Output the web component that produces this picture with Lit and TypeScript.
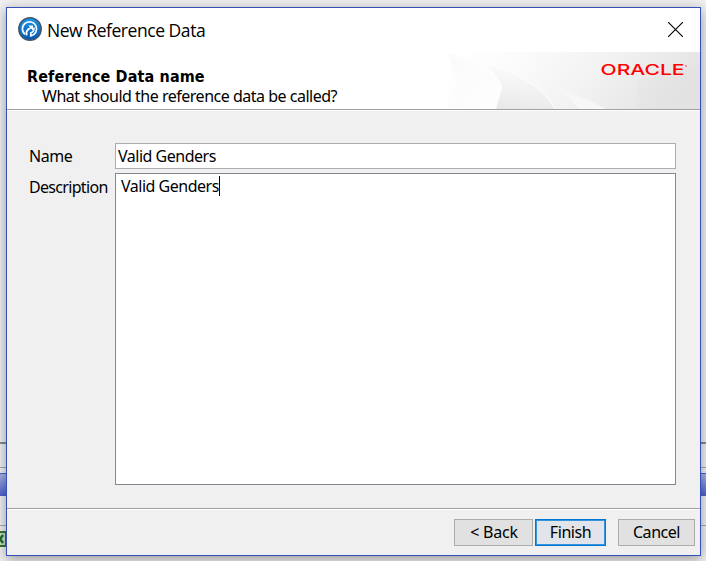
import { LitElement, html, css, svg } from "lit";
import { customElement } from "lit/decorators.js";

const logo = svg`
  <defs>
    <linearGradient id="disc" x1="0" y1="0" x2="0" y2="1">
      <stop offset="0" stop-color="#1a96ea" /><stop offset="1" stop-color="#0656b0" />
    </linearGradient>
  </defs>
  <circle cx="12" cy="12" r="11.2" fill="url(#disc)" stroke="#43586c" stroke-width="1.5" />
  <path d="M7 17.4A7.1 7.1 0 1 1 12.8 18.9V15.9A4.2 4.2 0 0 0 15.9 10.6" fill="none" stroke="#f2f9ff" stroke-width="1.7" />
  <path d="M8.8 18.4C7.6 15.2 8.8 12.4 12.6 11.2" fill="none" stroke="#fff" stroke-width="1.9" />
  <path d="M10.2 8.6H15V13.4Z" fill="#fff" />`;

const banner = svg`
  <defs>
    <linearGradient id="bg" x1="0" y1=".2" x2="1" y2=".4"><stop offset="0" stop-color="#fff" /><stop offset=".3" stop-color="#fafafa" /><stop offset=".6" stop-color="#f2f2f2" /><stop offset="1" stop-color="#e3e3e3" /></linearGradient>
    <linearGradient id="fold" x1="0" y1="0" x2="1" y2="1"><stop offset="0" stop-color="#fafafa" /><stop offset="1" stop-color="#fefefe" /></linearGradient>
    <linearGradient id="shade" x1=".3" y1="1" x2=".6" y2="0"><stop offset="0" stop-color="#e8e8e8" /><stop offset="1" stop-color="#f3f3f3" stop-opacity="0" /></linearGradient>
    <linearGradient id="ray" x1="0" y1="0" x2="1" y2="1"><stop offset="0" stop-color="#fff" stop-opacity=".1" /><stop offset="1" stop-color="#fff" stop-opacity=".65" /></linearGradient>
  </defs>
  <rect width="252" height="57" fill="url(#bg)" />
  <path d="M0 1C26 7 48 18 54 36L48 57H5L8 27Z" fill="url(#fold)" />
  <path d="M54 36C53 27 45 19 37 12C72 20 100 38 106 57H48Z" fill="url(#shade)" />
  <path d="M0 3C28 8 49 19 54 36M37 12C72 20 98 38 107 57" fill="none" stroke="#fff" stroke-opacity=".65" stroke-width="1.2" />
  <path d="M107 33C126 42 144 49 158 57H131C124 48 114 39 107 33Z" fill="url(#ray)" />
  <path d="M189 27L252 15V57H189Z" fill="#ddd" opacity=".22" />`;

@customElement("app-root")
export class AppRoot extends LitElement {
  static styles = css`
    :host { display: block; position: relative; width: 706px; height: 561px; overflow: hidden;
      background: #f0f0f0; color: #000; font: 16px/20px "Noto Sans", sans-serif; letter-spacing: -.49px; }
    * { box-sizing: border-box; }
    .desktop { position: absolute; inset: 0; display: grid; align-content: start;
      grid-template-rows: 442px 2px 23px 1px 5px 23px 29px 1px 5px 16px 14px; }
    .rule { background: #858b92; }
    .thin { background: #aaa; }
    .selected { background: linear-gradient(#a9b4e8, #4c60cf); border-top: 1px solid #4a60c8; }
    .sheet { width: 8px; height: 16px; display: block; }
    .window { position: absolute; left: 6px; top: 7px; width: 695px; height: 549px;
      border: 1px solid #3350b8; background: #f0f0f0; display: flex; flex-direction: column;
      box-shadow: 0 3px 12px rgba(0,0,0,.38); }
    .title { height: 44px; background: #fff; display: flex; align-items: center; padding: 0 17px 0 11px; }
    .title svg { margin-top: -2px; }
    .title .app { width: 24px; height: 24px; }
    .title span { flex: 1; margin-left: 5px; font: 17.5px/24px "Open Sans", sans-serif; letter-spacing: -.45px; }
    .head { height: 57px; background: #fff; position: relative; padding: 15px 0 0 20px; }
    .art { position: absolute; right: 0; top: 0; }
    .brand { font: 500 15px Inter, sans-serif; letter-spacing: 0; }
    .head b, .head p { display: block; margin: 0; position: relative; white-space: nowrap; }
    .head b { width: max-content; font: bold 16px/19px "DejaVu Sans Condensed", "DejaVu Sans", sans-serif; font-stretch: condensed; letter-spacing: .13px; }
    .head p { padding-left: 15px; width: max-content; }
    .line { height: 2px; background: #a0a0a0; border-bottom: 1px solid #fff; flex: none; }
    .form { height: 397px; padding: 32px 24px 0 22px; display: grid;
      grid-template-columns: 86px 1fr; grid-template-rows: 26px 312px; row-gap: 4px; }
    label { line-height: 26px; white-space: nowrap; }
    label.desc { line-height: 28px; letter-spacing: -.68px; }
    .field { background: #fff; border: 1px solid #abadb3; padding-left: 2px; line-height: 24px; }
    .area { background: #fff; border: 1px solid #828790; padding: 1px 0 0 5px; line-height: 22px; }
    .area i { display: inline-block; width: 1px; height: 20px; background: #000; vertical-align: -4px; }
    .buttons { display: flex; justify-content: flex-end; padding: 9px 5px 0 0; }
    button { font: inherit; letter-spacing: -.45px; color: #000; height: 27px; padding: 0 0 2px 0; border: 1px solid #adadad; background: #e1e1e1; border-radius: 0; }
    .back { width: 79px; margin-right: 2px; padding-left: 1px; letter-spacing: -.2px; }
    .finish { width: 71px; margin-right: 12px; border: 1px solid #0078d7; box-shadow: inset 0 0 0 1px #3794dc; background: #e1e5eb; }
    .cancel { width: 77px; }
  `;

  render() {
    return html`
      <div class="desktop">
        <div></div><div class="rule"></div><div></div><div class="thin"></div><div></div>
        <div class="selected"></div><div></div><div class="thin"></div><div></div>
        <svg class="sheet" viewBox="0 0 8 16"><path fill="#39752f" d="M0 0H8V16H0Z" /><path fill="#c5e0bd" d="M0 2H5V14H0Z" /><path d="M-3 4L3 12M3 4L-3 12" stroke="#1d6a2b" stroke-width="2.4" /></svg>
      </div>
      <div class="window">
        <div class="title">
          <svg class="app" viewBox="0 0 24 24">${logo}</svg>
          <span>New Reference Data</span>
          <svg width="15" height="15" viewBox="0 0 15 15"><path d="M0 0L15 15M15 0L0 15" stroke="#000" stroke-width="1.1" /></svg>
        </div>
        <div class="head">
          <svg class="art" width="252" height="57" viewBox="0 0 252 57">${banner}
            <text class="brand" x="152.5" y="23" textLength="84" lengthAdjust="spacingAndGlyphs" fill="#f00">ORACLE</text>
            <circle cx="238" cy="14" r=".9" fill="#f66" />
          </svg>
          <b>Reference Data name</b>
          <p>What should the reference data be called?</p>
        </div>
        <div class="line"></div>
        <div class="form">
          <label>Name</label><div class="field">Valid Genders</div>
          <label class="desc">Description</label><div class="area">Valid Genders<i></i></div>
        </div>
        <div class="line"></div>
        <div class="buttons">
          <button class="back">&lt; Back</button><button class="finish">Finish</button><button class="cancel">Cancel</button>
        </div>
      </div>`;
  }
}
